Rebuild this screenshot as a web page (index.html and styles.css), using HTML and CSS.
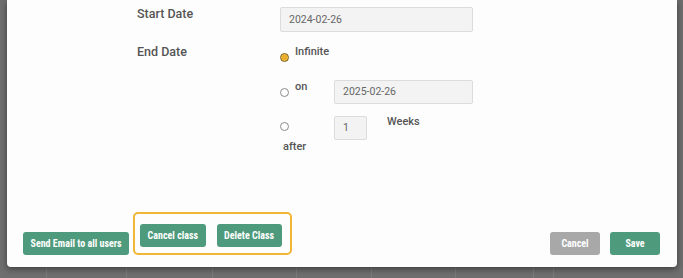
FILE: index.html
```html
<!DOCTYPE html>
<html lang="en">
<head>
<meta charset="utf-8">
<title>Class schedule</title>
<link rel="stylesheet" href="styles.css">
</head>
<body>
<div class="backdrop">
  <div class="modal">
    <div class="form">
      <div class="row row-start">
        <div class="label">Start Date</div>
        <div class="field field-date">2024-02-26</div>
      </div>
      <div class="row row-end">
        <div class="label">End Date</div>
        <div class="options">
          <div class="option opt-infinite">
            <span class="radio checked"></span>
            <span class="opt-text">Infinite</span>
          </div>
          <div class="option opt-on">
            <span class="radio"></span>
            <span class="opt-text opt-on-text">on</span>
            <div class="field field-end">2025-02-26</div>
          </div>
          <div class="option opt-after">
            <div class="after-col">
              <span class="radio"></span>
              <span class="opt-text after-text">after</span>
            </div>
            <div class="field field-num">1</div>
            <span class="opt-text weeks">Weeks</span>
          </div>
        </div>
      </div>
    </div>
    <div class="footer">
      <button class="btn">Send Email to all users</button>
      <div class="highlight">
        <button class="btn">Cancel class</button>
        <button class="btn">Delete Class</button>
      </div>
      <div class="spacer"></div>
      <button class="btn btn-grey">Cancel</button>
      <button class="btn">Save</button>
    </div>
  </div>
</div>
</body>
</html>
```
FILE: styles.css
```css
* { box-sizing: border-box; }
html, body { margin: 0; padding: 0; }
body {
  width: 683px;
  height: 278px;
  overflow: hidden;
  background-color: #6e6e6e;
  font-family: Roboto, "Noto Sans", "Liberation Sans", sans-serif;
}
.backdrop {
  height: 278px;
  background-image:
    linear-gradient(90deg, transparent 46px, #7b7b7b 46px, #7b7b7b 47px, transparent 47px),
    linear-gradient(90deg, transparent 126px, #7b7b7b 126px, #7b7b7b 127px, transparent 127px),
    linear-gradient(90deg, transparent 212px, #7b7b7b 212px, #7b7b7b 213px, transparent 213px),
    linear-gradient(90deg, transparent 296px, #7b7b7b 296px, #7b7b7b 297px, transparent 297px),
    linear-gradient(90deg, transparent 371px, #7b7b7b 371px, #7b7b7b 372px, transparent 372px),
    linear-gradient(90deg, transparent 455px, #7b7b7b 455px, #7b7b7b 456px, transparent 456px),
    linear-gradient(90deg, transparent 533px, #7b7b7b 533px, #7b7b7b 534px, transparent 534px),
    linear-gradient(90deg, transparent 553px, #7b7b7b 553px, #7b7b7b 554px, transparent 554px);
  padding-left: 7px;
}
.modal {
  width: 670px;
  height: 267px;
  background: #fdfdfd;
  border-radius: 0 0 4px 4px;
  box-shadow: 0 2px 6px rgba(0, 0, 0, 0.45);
  display: flex;
  flex-direction: column;
}
.form {
  padding: 7px 0 0 130px;
}
.row {
  display: flex;
  align-items: flex-start;
}
.label {
  width: 143px;
  font-size: 12.5px;
  line-height: 14px;
  font-weight: 500;
  color: #555;
  font-stretch: 90%;
}
.field {
  height: 25px;
  border: 1px solid #dcdcdc;
  border-radius: 2px;
  background: #f3f3f3;
  color: #666;
  font-size: 10.5px;
  line-height: 23px;
  padding-left: 8px;
}
.field-date { width: 193px; }
.row-end { margin-top: 13px; }
.options {
  display: flex;
  flex-direction: column;
}
.option {
  display: flex;
  align-items: flex-start;
}
.radio {
  flex: none;
  width: 9px;
  height: 9px;
  border-radius: 50%;
  border: 1px solid #8a8a8a;
  background: #fff;
  margin-top: 8px;
}
.radio.checked {
  border: 1.5px solid #7a5a12;
  background: radial-gradient(circle, #e9ad2c 0, #e9ad2c 55%, #f4c04a 56%);
}
.opt-text {
  font-size: 11px;
  line-height: 14px;
  font-weight: 500;
  color: #555;
  margin-left: 6px;
  font-stretch: 90%;
}
.opt-on { margin-top: 18px; }
.opt-on-text { width: 39px; }
.field-end { width: 139px; height: 24px; line-height: 22px; }
.opt-after { margin-top: 12px; }
.after-col {
  width: 54px;
  display: flex;
  flex-direction: column;
  align-items: flex-start;
}
.after-col .radio { margin-top: 6px; }
.after-text {
  margin-left: 3px;
  margin-top: 9px;
}
.field-num { width: 33px; height: 24px; line-height: 22px; }
.weeks {
  margin-left: 20px;
  margin-top: -1px;
}
.footer {
  margin-top: auto;
  display: flex;
  align-items: flex-end;
  padding: 0 17px 12px 16px;
}
.btn {
  height: 23px;
  min-width: 50px;
  padding: 0 7.5px;
  border: none;
  border-radius: 3px;
  background: #4e9a7c;
  color: #fff;
  font-family: Roboto, "Noto Sans", "Liberation Sans", sans-serif;
  font-size: 10px;
  font-weight: 700;
  font-stretch: 85%;
  white-space: nowrap;
}
.btn-grey { background: #a8a8a8; }
.highlight {
  display: flex;
  gap: 11px;
  margin-left: 4px;
  padding: 10px 8px 6px 5px;
  border: 2px solid #f1b635;
  border-radius: 5px;
}
.spacer { flex: 1; }
.btn-grey { margin-right: 10px; }
```
